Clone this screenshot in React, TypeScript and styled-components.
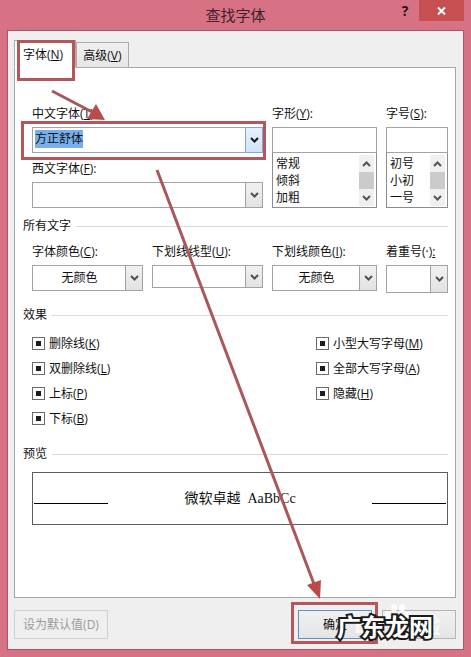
import React from "react";
import styled, { createGlobalStyle } from "styled-components";

const GlobalStyle = createGlobalStyle`
  *, *::before, *::after { box-sizing: border-box; }
  body { margin: 0; background: #d77284; }
  body, button, input, select {
    font-family: "Open Sans", "Noto Sans CJK SC", sans-serif;
    font-size: 12px;
    line-height: 20px;
    color: #101010;
  }
`;

const Dialog = styled.main`
  position: relative;
  display: flex;
  flex-direction: column;
  min-height: 100vh;
  padding: 0 7px 7px;
  background: #d77284;
`;

const TitleBar = styled.header`
  display: grid;
  grid-template-columns: 1fr auto 1fr;
  height: 30px;
`;

const Title = styled.h1`
  grid-column: 2;
  margin: 0;
  font-size: 15px;
  font-weight: 400;
  line-height: 30px;
  color: #42202a;
`;

const WindowButtons = styled.div`
  display: flex;
  justify-content: flex-end;
  align-items: flex-start;
`;

const WindowButton = styled.button<{ $close?: boolean }>`
  display: flex;
  align-items: center;
  justify-content: center;
  width: ${(p) => (p.$close ? 45 : 28)}px;
  height: 21px;
  padding: 0;
  border: 0;
  background: ${(p) => (p.$close ? "#c84f51" : "transparent")};
  color: #2c1218;
  font-size: 14px;
  font-weight: 700;
`;

const Body = styled.section`
  flex: 1;
  display: flex;
  flex-direction: column;
  padding: 9px 7px 10px 6px;
  border: 1px solid #a9566a;
  background: #f0eff0;
`;

const Tabs = styled.div`
  display: flex;
  align-items: flex-end;
  height: 28px;
  margin-bottom: -1px;
`;

const Tab = styled.button<{ $active?: boolean }>`
  position: relative;
  height: ${(p) => (p.$active ? 28 : 26)}px;
  padding: ${(p) => (p.$active ? "2px 12px 0 8px" : "2px 7px 0 6px")};
  border: 1px solid #acacac;
  border-bottom-color: ${(p) => (p.$active ? "#fff" : "#acacac")};
  background: ${(p) => (p.$active ? "#fff" : "linear-gradient(#f0f0f0, #e6e6e6)")};
  white-space: nowrap;
`;

const Panel = styled.div`
  flex: 1;
  padding: 36px 7px 24px 8px;
  border: 1px solid #a6a6a6;
  background: #fff;
`;

const Marker = styled.span<{ $inset: string }>`
  position: absolute;
  inset: ${(p) => p.$inset};
  z-index: 2;
  border: 3px solid #b5565b;
  pointer-events: none;
`;

const FieldGrid = styled.div`
  display: grid;
  grid-template-columns: 111fr 111fr 105fr 62fr;
  column-gap: 9px;
  row-gap: 6px;
  align-items: start;
  padding-left: 9px;
`;

const Field = styled.div<{ $column?: string; $row?: string }>`
  display: flex;
  flex-direction: column;
  gap: 3px;
  min-width: 0;
  grid-column: ${(p) => p.$column ?? "auto"};
  grid-row: ${(p) => p.$row ?? "auto"};
`;

const Label = styled.label`
  white-space: nowrap;
`;

const Box = styled.div<{ $height?: number }>`
  position: relative;
  display: flex;
  align-items: stretch;
  height: ${(p) => p.$height ?? 26}px;
  border: 1px solid #a3a3a3;
  background: #fff;
`;

const TextInput = styled.input`
  flex: 1;
  min-width: 0;
  padding: 0 2px;
  border: 0;
  outline: 0;
  background: transparent;
`;

const SelectedInput = styled(TextInput)`
  flex: none;
  field-sizing: content;
  height: 18px;
  margin: 2px auto 0 2px;
  padding: 0;
  line-height: 18px;
  background: #78aeea;
`;

const DropButton = styled.button<{ $hot?: boolean }>`
  display: flex;
  align-items: center;
  justify-content: center;
  width: 18px;
  margin: -1px;
  padding: 0;
  border: 1px solid ${(p) => (p.$hot ? "#7fa9d3" : "#a3a3a3")};
  background: ${(p) =>
    p.$hot ? "linear-gradient(#e6f1fb, #cfe3f8)" : "linear-gradient(#f1f1f1, #e2e2e2)"};
  color: ${(p) => (p.$hot ? "#101820" : "#505050")};
`;

const Select = styled.select`
  flex: 1;
  min-width: 0;
  padding: 0;
  border: 0;
  outline: 0;
  appearance: none;
  background: transparent;
  text-align-last: center;
`;

const List = styled.div`
  display: flex;
  justify-content: space-between;
  height: 56px;
  margin-top: -4px;
  padding: 2px 2px 1px 3px;
  border: 1px solid #8c8c8c;
  background: #fff;
`;

const Options = styled.ul`
  margin: 0;
  padding: 0;
  list-style: none;
  line-height: 17px;
`;

const Scrollbar = styled.div`
  display: grid;
  grid-template-rows: 17px 17px 17px;
  width: 15px;
  background: #f0f0f0;
`;

const ScrollButton = styled.button`
  display: flex;
  align-items: center;
  justify-content: center;
  padding: 0;
  border: 0;
  background: transparent;
  color: #555;
`;

const Thumb = styled.span`
  background: #cbcbcb;
`;

const SectionTitle = styled.h2<{ $top: number }>`
  display: flex;
  align-items: center;
  gap: 5px;
  margin: ${(p) => p.$top}px 0 6px;
  font-size: 12px;
  font-weight: 400;
  &::after {
    content: "";
    flex: 1;
    height: 1px;
    background: #dadada;
  }
`;

const Effects = styled.div`
  display: grid;
  grid-template-columns: 284fr 132fr;
  padding-left: 9px;
`;

const CheckRow = styled.label`
  display: flex;
  align-items: center;
  gap: 4px;
  height: 25px;
  white-space: nowrap;
`;

const Check = styled.input`
  display: grid;
  place-items: center;
  width: 13px;
  height: 13px;
  margin: 0;
  border: 1px solid #6a6a6a;
  appearance: none;
  background: #fff;
  &:checked::before {
    content: "";
    width: 5px;
    height: 5px;
    background: #1c1c1c;
  }
`;

const Preview = styled.div`
  display: grid;
  grid-template-columns: 74fr 264fr 74fr;
  align-items: center;
  height: 53px;
  margin: 8px 0 0 9px;
  padding: 0 1px;
  border: 1px solid #5d5d5d;
  font: 14px/20px "Liberation Serif", "Noto Sans CJK SC", serif;
  text-align: center;
  white-space: pre;
`;

const Rule = styled.span`
  height: 1px;
  margin-top: 10px;
  background: #000;
`;

const Footer = styled.footer`
  display: flex;
  gap: 10px;
  margin-top: 12px;
`;

const ButtonSlot = styled.div<{ $push?: boolean }>`
  position: relative;
  display: flex;
  margin-right: ${(p) => (p.$push ? "auto" : "0")};
`;

const Button = styled.button<{ $primary?: boolean; $wide?: boolean }>`
  width: ${(p) => (p.$wide ? 94 : 74)}px;
  height: 29px;
  padding: 0;
  border: 1px solid ${(p) => (p.$primary ? "#5b93c4" : "#b4b4b4")};
  background: linear-gradient(#f0f0f0, #e5e5e5);
  &:disabled {
    border-color: #cfcfcf;
    background: #efefef;
    color: #9b9b9b;
  }
`;

const Arrows = styled.svg`
  position: absolute;
  inset: 0;
  z-index: 2;
  width: 100%;
  height: 100%;
  pointer-events: none;
`;

const Paw = styled.svg`
  position: absolute;
  left: 2px;
  top: -8px;
  width: 28px;
  height: 30px;
`;

const FaintMark = styled.span`
  position: absolute;
  left: -28px;
  top: 4px;
  display: flex;
  gap: 28px;
  font-size: 22px;
  font-weight: 700;
  color: #fff;
  opacity: 0.7;
  white-space: nowrap;
`;

const SiteMark = styled.span`
  position: absolute;
  right: 23px;
  top: 3px;
  z-index: 3;
  font-size: 24px;
  font-weight: 700;
  line-height: 28px;
  color: #fff;
  white-space: nowrap;
  -webkit-text-stroke: 4px #1b1b1b;
  paint-order: stroke fill;
`;

const Chevron = ({ up }: { up?: boolean }) => (
  <svg width="9" height="8" viewBox="0 0 9 8" fill="none" stroke="currentColor" strokeWidth="2" aria-hidden="true">
    <path d={up ? "M1 6 4.5 2.5 8 6" : "M1 2 4.5 5.5 8 2"} />
  </svg>
);

const Name = ({ text, k, colon = true }: { text: string; k: string; colon?: boolean }) => (
  <span>
    {text}(<u>{k}</u>){colon && ":"}
  </span>
);

const ListField = ({ id, text, k, items, column }: {
  id: string; text: string; k: string; items: string[]; column: string;
}) => (
  <Field $column={column} $row="1 / span 2">
    <Label htmlFor={id}><Name text={text} k={k} /></Label>
    <Box><TextInput id={id} /></Box>
    <List>
      <Options>{items.map((item) => <li key={item}>{item}</li>)}</Options>
      <Scrollbar>
        <ScrollButton aria-label="向上"><Chevron up /></ScrollButton>
        <Thumb />
        <ScrollButton aria-label="向下"><Chevron /></ScrollButton>
      </Scrollbar>
    </List>
  </Field>
);

const SelectField = ({ id, label, value = "", height }: {
  id: string; label: React.ReactNode; value?: string; height?: number;
}) => (
  <Field>
    <Label htmlFor={id}>{label}</Label>
    <Box $height={height}>
      <Select id={id} defaultValue={value}><option value={value}>{value}</option></Select>
      <DropButton as="span"><Chevron /></DropButton>
    </Box>
  </Field>
);

const effects = [
  [["删除线", "K"], ["双删除线", "L"], ["上标", "P"], ["下标", "B"]],
  [["小型大写字母", "M"], ["全部大写字母", "A"], ["隐藏", "H"]],
];

export default function App() {
  return (
    <Dialog>
      <GlobalStyle />
      <TitleBar>
        <Title>查找字体</Title>
        <WindowButtons>
          <WindowButton>?</WindowButton>
          <WindowButton $close aria-label="关闭">
            <svg width="9" height="8" viewBox="0 0 9 8" stroke="#fff" strokeWidth="2">
              <path d="M1 0.5 8 7.5M8 0.5 1 7.5" />
            </svg>
          </WindowButton>
        </WindowButtons>
      </TitleBar>
      <Body>
        <Tabs role="tablist">
          <Tab role="tab" aria-selected $active>
            <Name text="字体" k="N" colon={false} />
            <Marker $inset="-1px 0 -14px 2px" />
          </Tab>
          <Tab role="tab" aria-selected={false}><Name text="高级" k="V" colon={false} /></Tab>
        </Tabs>
        <Panel>
          <FieldGrid>
            <Field $column="1 / span 2" $row="1">
              <Label htmlFor="cjk"><Name text="中文字体" k="T" /></Label>
              <Box>
                <SelectedInput id="cjk" defaultValue="方正舒体" />
                <DropButton $hot aria-label="展开中文字体"><Chevron /></DropButton>
                <Marker $inset="-7px -4px -8px -12px" />
              </Box>
            </Field>
            <ListField column="3" id="style" text="字形" k="Y" items={["常规", "倾斜", "加粗"]} />
            <ListField column="4" id="size" text="字号" k="S" items={["初号", "小初", "一号"]} />
            <Field $column="1 / span 2" $row="2">
              <Label htmlFor="latin"><Name text="西文字体" k="F" /></Label>
              <Box>
                <TextInput id="latin" />
                <DropButton aria-label="展开西文字体"><Chevron /></DropButton>
              </Box>
            </Field>
          </FieldGrid>

          <SectionTitle $top={8}>所有文字</SectionTitle>
          <FieldGrid>
            <SelectField id="color" label={<Name text="字体颜色" k="C" />} value="无颜色" />
            <SelectField id="line" label={<Name text="下划线线型" k="U" />} height={23} />
            <SelectField id="lineColor" label={<Name text="下划线颜色" k="I" />} value="无颜色" />
            <SelectField id="emphasis" label={<>着重号(·)<u>:</u></>} height={28} />
          </FieldGrid>

          <SectionTitle $top={12}>效果</SectionTitle>
          <Effects>
            {effects.map((column, i) => (
              <div key={i}>
                {column.map(([text, k]) => (
                  <CheckRow key={k}>
                    <Check type="checkbox" defaultChecked />
                    <Name text={text} k={k} colon={false} />
                  </CheckRow>
                ))}
              </div>
            ))}
          </Effects>

          <SectionTitle $top={13}>预览</SectionTitle>
          <Preview>
            <Rule />
            <span>微软卓越  AaBbCc</span>
            <Rule />
          </Preview>
        </Panel>
        <Footer>
          <ButtonSlot $push><Button $wide disabled>设为默认值(D)</Button></ButtonSlot>
          <ButtonSlot>
            <Button $primary>确定</Button>
            <Marker $inset="-8px -6px -5px -7px" />
          </ButtonSlot>
          <ButtonSlot>
            <Button>取消</Button>
            <FaintMark><span>B</span><span>经验</span></FaintMark>
            <Paw viewBox="0 0 28 30" fill="#fff" fillOpacity="0.8" aria-hidden="true">
              <ellipse cx="4" cy="13" rx="3" ry="4" />
              <ellipse cx="10" cy="6" rx="3" ry="4" />
              <ellipse cx="18" cy="6" rx="3" ry="4" />
              <ellipse cx="24" cy="13" rx="3" ry="4" />
              <path d="M14 12c4 0 5 5 8 8 3 4 0 8-4 7-3-1-5-1-8 0-4 1-7-3-4-7 3-3 4-8 8-8z" />
            </Paw>
            <SiteMark>广东龙网</SiteMark>
          </ButtonSlot>
        </Footer>
      </Body>
      <Arrows viewBox="0 0 471 657" preserveAspectRatio="none" aria-hidden="true">
        <path d="M52 91 94 113M157 170 314 584" stroke="#a9575b" strokeWidth="3" fill="none" />
        <path d="M105 120 96 104 87 119zM320 599 321 580 307 585z" fill="#bd4a4b" />
      </Arrows>
    </Dialog>
  );
}
